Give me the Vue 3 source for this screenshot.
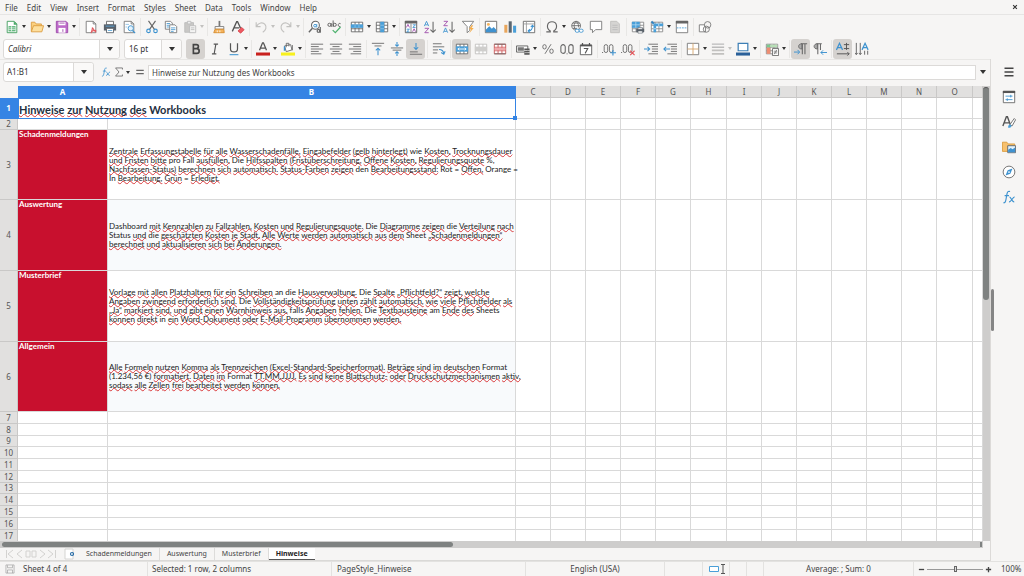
<script setup>
import { ref } from 'vue'

const menus = ['File', 'Edit', 'View', 'Insert', 'Format', 'Styles', 'Sheet', 'Data', 'Tools', 'Window', 'Help']

const lines = (w, c = '#666') =>
  `<g stroke="${c}">` + w.map(([x1, x2], i) => `<path d="M${x1} ${2.5 + i * 2.75}H${x2}"/>`).join('') + '</g>'
const page = '<path d="M2.5 1.5h8l3 3v10h-11z" fill="#fff" stroke="#777"/><path d="M10.5 1.5v3h3" stroke="#777"/>'
const tableGrid = (c = '#666') => `<path d="M1.5 2.5h13v11h-13zM1.5 6h13M1.5 10h13M5.8 2.5v11M10.2 2.5v11" fill="#fff" stroke="${c}"/>`

const icons = {
  new: '<path d="M2.5 1.5h8l3 3v10h-11z" fill="#fff" stroke="#3a9a58"/><path d="M10 1.5v4h4z" fill="#47a766"/><path d="M4 7h8v6H4z" fill="#58b276"/><path d="M4 9h8M4 11h8M7.500 7v6" stroke="#fff" stroke-width=".8"/>',
  open: '<path d="M1.500 13V2.500h4l1.500 2h6v3" fill="#fbd07f" stroke="#dc9a3d"/><path d="M1.500 13.500L4 6.500h11.500l-2 7z" fill="#fddf9e" stroke="#dc9a3d"/>',
  save: '<path d="M1.500 1.500h11l2 2v11h-13z" fill="#bd6ac9" stroke="#9c48a9"/><path d="M4 2h8v4H4z" fill="#fff"/><path d="M4 9h8v5.500H4z" fill="#fff"/><path d="M9 10.500v3M5 3.500h6" stroke="#9c48a9"/>',
  pdf: page + '<path d="M8 15c1-3 2-5 1.500-6.500M8 14c2-2 4-2.500 6-2M10 9c1 3 2 4 4 5" stroke="#e2575c" stroke-width="1.200"/>',
  print: '<path d="M4 1.500h8v4H4z" fill="#fff" stroke="#666"/><path d="M1 5h14v7H1z" fill="#59616a"/><path d="M3 7h10" stroke="#5ea9dd"/><path d="M4 9.500h8v5H4z" fill="#fff" stroke="#59616a"/><path d="M5.500 12h5" stroke="#5ea9dd"/>',
  preview: page + '<circle cx="10" cy="9.500" r="3" fill="#e3f2fc" stroke="#3d92cf"/><path d="M12 12l3 3" stroke="#3d92cf" stroke-width="1.400"/><path d="M4 5h4M4 8h2" stroke="#8dbfe2"/>',
  cut: '<path d="M4 1l7 10M12 1L5 11" stroke="#666" stroke-width="1.300"/><circle cx="4" cy="12.500" r="2" stroke="#3d92cf" stroke-width="1.300"/><circle cx="12" cy="12.500" r="2" stroke="#3d92cf" stroke-width="1.300"/>',
  copy: '<path d="M1.500 1.500h6l2 2v7h-8z" fill="#fff" stroke="#777"/><path d="M6.500 5.500h6l2 2v7h-8z" fill="#fff" stroke="#777"/><path d="M8 9h5M8 11h5M8 13h3M3 4h4M3 6h3M3 8h3" stroke="#4a9ad1"/>',
  paste: '<path d="M2 3h10v11H2z" fill="#c9c8c6" stroke="#bbb"/><path d="M5 1.500h4v3H5z" fill="#eee" stroke="#bbb"/><path d="M7.500 6.500h7v8h-7z" fill="#f4f4f3" stroke="#bbb"/><path d="M9 9h4M9 11h4" stroke="#bbb"/>',
  clone: '<path d="M7.500 1h2v6h-2z" fill="#777"/><path d="M3.500 7.500h10v3h-10z" fill="#fff" stroke="#777"/><path d="M3.500 10.500h10l.5 4h-12z" fill="#f5b35c" stroke="#d58a2b"/><path d="M6 12v2M9 12v2" stroke="#fff"/>',
  clear: '<path d="M1.500 13L6.500 2h1L11 9.500M3.500 9h6" stroke="#555" stroke-width="1.500"/><path d="M8 12.500l4-4 3 2.500-4 4z" fill="#ee5a62" stroke="#d8454d"/>',
  undo: '<path d="M2.500 2.500v5h5M3 7c2-4 7-5 9.500-2s1 7-2.500 9" stroke="#c2c1bf" stroke-width="1.300"/>',
  redo: '<path d="M13.500 2.500v5h-5M13 7c-2-4-7-5-9.500-2s-1 7 2.500 9" stroke="#c2c1bf" stroke-width="1.300"/>',
  find: '<circle cx="8.500" cy="6" r="4.500" fill="#fff" stroke="#666" stroke-width="1.200"/><path d="M5 9.500L1 14" stroke="#666" stroke-width="1.600"/><circle cx="8" cy="6.500" r="1.500" stroke="#3d92cf"/><path d="M10 4.500V8.500" stroke="#3d92cf"/><circle cx="12" cy="12.500" r="1.600" stroke="#555" stroke-width="1.200"/><path d="M14 8v6.500" stroke="#555" stroke-width="1.200"/>',
  spell: '<circle cx="2.800" cy="5.500" r="1.800" stroke="#555"/><path d="M4.800 3.500v4.500M7 .5V8" stroke="#555"/><circle cx="8.800" cy="5.500" r="1.800" stroke="#555"/><path d="M15.500 4.200c-3-1.700-4 4-.3 3.200" stroke="#555"/><path d="M6.500 11.500l3 3 6-6.500" stroke="#4db16d" stroke-width="1.400"/>',
  row: tableGrid() + '<path d="M1 5h14v4H1z" fill="#4a9fd8"/><path d="M5.800 5v4M10.200 5v4" stroke="#a8d4f2" stroke-width=".7"/>',
  col: tableGrid() + '<path d="M6 2h4.500v12H6z" fill="#4a9fd8"/><path d="M6 6h4.500M6 10h4.500" stroke="#a8d4f2" stroke-width=".7"/>',
  autofilter: '<path d="M1.500 1.500h13v13h-13z" fill="#fff" stroke="#555"/><path d="M1 1h14v3H1z" fill="#666"/><path d="M8 4v11" stroke="#777"/><path d="M2.800 8.500l1.700-3.500 1.700 3.500M9.800 13.500l1.700-3.500 1.700 3.500" stroke="#9c48a9"/><path d="M3 10.500h3.200l-3.200 3h3.200M10 5.500h3.200l-3.200 3h3.200" stroke="#3d92cf"/>',
  sortasc: '<path d="M1.500 7L4 1.500 6.500 7M2.500 5.500h3" stroke="#3d92cf"/><path d="M2 9.500h4.500L2 14.500h4.500" stroke="#9c48a9"/><path d="M11.500 2v12M8.500 11l3 3 3-3" stroke="#666" stroke-width="1.200"/>',
  sortdesc: '<path d="M1.500 14.500L4 9l2.500 5.500M2.500 13h3" stroke="#3d92cf"/><path d="M2 1.500h4.500L2 6.500h4.500" stroke="#9c48a9"/><path d="M11.500 2v12M8.500 11l3 3 3-3" stroke="#666" stroke-width="1.200"/>',
  filter: '<path d="M1.500 1.500h13L10 7.500V12l-3 2.500v-7z" fill="#fff" stroke="#777"/><path d="M12 6l-3 4.500h2.500L9.500 15l5-6h-2.500l2-3z" fill="#f5ae4d"/>',
  image: '<path d="M1.500 1.500h13v13h-13z" fill="#fff" stroke="#666"/><path d="M2 14V11l4-4 3 3 2-2 3 3v3z" fill="#3f92d0"/><circle cx="5" cy="5" r="1.700" fill="#f5b35c"/>',
  chart: '<path d="M1.500 5.500h3.500v9H1.500z" fill="#e9a65c"/><path d="M6.500 1.500H10v13H6.500z" fill="#5b656e"/><path d="M11.500 6.500H15v8h-3.500z" fill="#4a9fd8"/>',
  pivot: '<path d="M1.500 1.500h13v13h-13z" fill="#fff" stroke="#666"/><path d="M2 4.500h12M5 2v12" stroke="#999"/><path d="M7 12.500c3 0 5-2 5-6M10 8l2-2 2 2M9 10.500l-2 2 2 2" stroke="#3d92cf" stroke-width="1.200"/>',
  omega: '<path d="M1.500 13.500H6v-1C1 9.500 2 2 8 2s7 7.500 2 10.500v1h4.500" stroke="#666" stroke-width="1.300"/>',
  link: '<circle cx="7" cy="6.500" r="5" fill="#fff" stroke="#666"/><path d="M2 6.500h10M3 3.500h8M3 9.500h5M7 1.500c-3 3-3 7 0 10M7 1.500c3 3 3 5 2.500 7" stroke="#666"/><rect x="6" y="10.500" width="4.500" height="3.500" rx="1.700" fill="#fff" stroke="#3d92cf"/><rect x="10.500" y="10.500" width="4.500" height="3.500" rx="1.700" fill="#fff" stroke="#3d92cf"/>',
  comment: '<path d="M1.500 1.500h13v9.500H7.500L4 14.500V11H1.500z" fill="#fff" stroke="#777"/>',
  doc: '<path d="M3 1.500h7l3 3v10H3z" fill="#d5d4d2" stroke="#c0bfbd"/><path d="M5 6h6M5 8.500h6M5 11h6" stroke="#bbb"/>',
  printarea: tableGrid('#888') + '<path d="M1 2h9v7H1z" fill="#4a9fd8"/><path d="M1 5.500h9M5.500 2v7" stroke="#bfe0f5" stroke-width=".8"/><path d="M6 10h9v4H6z" fill="#59616a"/><path d="M8 8.500h5v2H8zM8 12.500h5v2.500H8z" fill="#fff" stroke="#59616a" stroke-width=".7"/>',
  freeze: tableGrid('#888') + '<path d="M4 4h11v3H7v7H4z" fill="#4a9fd8"/><path d="M10 4v3M4 10h3" stroke="#fff" stroke-width=".7"/><path d="M1 3h4M3 1v4M1.500 1.500l3 3" stroke="#2d7fbe"/>',
  split: '<path d="M1.500 1.500h13v13h-13z" fill="#fff" stroke="#777"/><path d="M1 1h14v3H1z" fill="#666"/><path d="M2 9h12" stroke="#4a9fd8" stroke-dasharray="2 1"/>',
  shapes: '<path d="M1.500 5.500h7v8h-7z" fill="#fff" stroke="#777"/><circle cx="11" cy="5.500" r="3.700" fill="#f6f5f4" stroke="#777"/><circle cx="9.500" cy="10.500" r="3.500" stroke="#777"/>',
  bold: '<path d="M5 3h3.500c3 0 3 4.500 0 4.500H5zM5 7.500h4c3.500 0 3.500 5.500 0 5.500H5z" stroke="#444" stroke-width="1.900"/>',
  italic: '<path d="M6.500 2.500h5M4.500 13.500h5M9 2.500l-2 11" stroke="#555" stroke-width="1.300"/>',
  underline: '<path d="M4 1.500V8c0 4.500 8 4.500 8 0V1.500" stroke="#555" stroke-width="1.400"/><path d="M3 14.500h10" stroke="#3d92cf" stroke-width="1.200"/>',
  color: '<path d="M4 9.500L7.500 1h1L12 9.500M5.500 7h5" stroke="#555" stroke-width="1.500"/><path d="M0 12h16v3.500H0z" fill="#c9211e"/>',
  highlight: '<path d="M4 4.500l7-1.500 1.500 6-6.500 2z" fill="#fff" stroke="#666"/><path d="M6 6V1.500h3V5M13 3.500v6" stroke="#666"/><path d="M4 5v5" stroke="#3d92cf" stroke-width="1.600"/><path d="M0 12h16v3.500H0z" fill="#f8f01e"/>',
  left: lines([[1, 15], [1, 10], [1, 15], [1, 10], [1, 13]]),
  center: lines([[1, 15], [4, 12], [1, 15], [4, 12], [2, 14]]),
  right: lines([[1, 15], [6, 15], [1, 15], [6, 15], [3, 15]]),
  top: '<path d="M1 1.500h14M4 4.500h8" stroke="#666"/><path d="M8 15V7M5.500 9.500L8 7l2.500 2.500" stroke="#3d92cf" stroke-width="1.200"/>',
  middle: '<path d="M1 6.800h14M3 9.300h10" stroke="#666"/><path d="M8 0v5M6 3l2 2 2-2M8 16v-5M6 13l2-2 2 2" stroke="#3d92cf" stroke-width="1.200"/>',
  bottom: '<path d="M1 14h14M1 11.300h9" stroke="#666"/><path d="M8 1v7.500M5.500 6L8 8.500 10.500 6" stroke="#3d92cf" stroke-width="1.200"/>',
  wrap: '<path d="M1 2h10M1 5.500h13M1 9h6M1 12.500h5" stroke="#666"/><path d="M8 8.500c3 0 5 1.500 5.500 4.500M10.500 12l3 2 1.500-3.500" stroke="#3d92cf" stroke-width="1.200"/>',
  merge: tableGrid() + '<path d="M1 5h14v6H1z" fill="#4a9fd8"/><path d="M3 8h10M5 6.500L3.500 8 5 9.500M11 6.500L12.500 8 11 9.500" stroke="#fff"/>',
  mergecells: tableGrid('#c0bfbd') + '<path d="M1 5.500h14v5H1z" fill="#cfcecc"/>',
  unmerge: tableGrid('#c55') + '<path d="M2 6.500h12v3H2z" fill="#f0a9ab"/><path d="M1.500 2.500h13M1.500 13.500h13" stroke="#666"/>',
  currency: '<path d="M.5 4.500h13v7H.5z" fill="#fff" stroke="#555"/><path d="M2 6h7v4H2z" fill="#777"/><path d="M9.500 7.500h6v2h-6zM9.500 10h6v2h-6zM9.500 12.500h6v2h-6z" fill="#555"/><path d="M10 9.700h5M10 12.200h5" stroke="#ddd" stroke-width=".6"/>',
  percent: '<ellipse cx="4" cy="5.500" rx="2" ry="2.500" stroke="#666"/><ellipse cx="12" cy="10.500" rx="2" ry="2.500" stroke="#666"/><path d="M11.500 2.500l-7 11" stroke="#666"/>',
  number: '<rect x="1" y="3" width="5" height="10" rx="2.500" stroke="#666" stroke-width="1.200"/><rect x="10" y="3" width="5" height="10" rx="2.500" stroke="#666" stroke-width="1.200"/><path d="M7.500 13.500h1.200" stroke="#666"/>',
  date: '<path d="M1.500 3.500h13v11h-13z" fill="#fff" stroke="#555"/><path d="M1.500 4h13" stroke="#555" stroke-width="2"/><path d="M4 1v3M12 1v3" stroke="#555" stroke-width="1.400"/><path d="M5.500 7.500h4.500L7 13" stroke="#555" stroke-width="1.200"/>',
  adddec: '<path d="M0 12h1.300" stroke="#666"/><rect x="2.500" y="3" width="4" height="9" rx="2" stroke="#666"/><rect x="8.500" y="3" width="4" height="9" rx="2" stroke="#666"/><path d="M12.500 9v6.500M9.500 12.300H16" stroke="#3d92cf" stroke-width="1.300"/>',
  deldec: '<path d="M0 12h1.300" stroke="#666"/><rect x="2.500" y="3" width="4" height="9" rx="2" stroke="#666"/><rect x="8.500" y="3" width="4" height="9" rx="2" stroke="#666"/><path d="M10.500 10l5 5M15.500 10l-5 5" stroke="#e2575c" stroke-width="1.300"/>',
  indent: lines([[5, 16], [9, 16], [9, 16], [9, 16], [5, 16]]) + '<path d="M0 8h6M4 5.500L6.500 8 4 10.500" stroke="#3d92cf" stroke-width="1.200"/>',
  outdent: lines([[5, 16], [9, 16], [9, 16], [9, 16], [5, 16]]) + '<path d="M1 8h7M3.500 5.500L1 8l2.500 2.500" stroke="#3d92cf" stroke-width="1.200"/>',
  borders: '<path d="M1.500 1.500h13v13h-13z" fill="#fff" stroke="#777"/><path d="M8 1.500v13M1.500 8h13" stroke="#d6a46a"/>',
  linestyle: '<path d="M1 2.500h14M1 6h14" stroke="#bbb" stroke-width="1.500"/><path d="M1 9.500h14M1 13.500h14" stroke="#c2c1bf" stroke-width="2"/>',
  bordercolor: '<path d="M2.500 1.500h11v8.500h-11z" fill="#fff" stroke="#3d7fb5" stroke-width="1.400"/><path d="M0 12h16v3.500H0z" fill="#2a6099"/>',
  conditional: tableGrid('#888') + '<path d="M2 3h4v3H2z" fill="#7cc98f"/><path d="M6 3h8v3H6z" fill="#b8dfb7"/><path d="M2 6.500h4v7H2z" fill="#ee8d72"/><path d="M8.500 7.500h7v8h-7z" fill="#fff" stroke="#666"/><path d="M10 10.500h4M10 12.500h4M13.500 9l-3 5" stroke="#666" stroke-width=".8"/>',
  ltr: '<path d="M9.500 14V2M12.500 14V2M15 2H8" stroke="#666" stroke-width="1.200"/><path d="M9 2C4 2 4 8 9 8z" fill="#aaa" stroke="#666"/><path d="M0 11.500h6M4 9l2.500 2.500L4 14" stroke="#3d92cf" stroke-width="1.100"/>',
  rtl: '<path d="M5.500 14V2M8.500 9V2M10 2H4" stroke="#666" stroke-width="1.200"/><path d="M5 2C0 2 0 8 5 8z" fill="#aaa" stroke="#666"/><path d="M9 12h7M11.500 9.500L9 12l2.500 2.500" stroke="#3d92cf" stroke-width="1.100"/>',
  horizontal: '<path d="M.5 9L4 1.500 7.500 9M2 6.500h4" stroke="#3d92cf" stroke-width="1.400"/><path d="M9 3h6M9 7.500h6M12 1v8M1 13.500h14M13 11.500l2 2-2 2" stroke="#555" stroke-width="1.100"/>',
  vertical: '<path d="M8 9l3.500-7.500L15 9M9.500 6.500h4" stroke="#3d92cf" stroke-width="1.400"/><path d="M1.500 1v13M6 1v13M0 12.500l1.500 2 1.500-2M4.500 12.500l1.500 2 1.500-2M11 10v4.500M14.500 10v4.500" stroke="#666" stroke-width="1.100"/>',
  fx: '<path d="M1.500 14.500c2 .5 2.500-1 3-3.500l1.200-6.500c.5-2.500 1.500-3.500 3.500-2.700M3 6.500h5M8.500 8c2 0 2.500 6 5.500 5.500M14.500 8c-2-.5-4 6-6.500 5.500" stroke="#3d92cf" stroke-width="1.300"/>',
  sigma: '<path d="M13.500 4V1.500h-11L8 8l-5.500 6.500h11V12" stroke="#666" stroke-width="1.300"/>',
  equals: '<path d="M2 5.500h12M2 10.500h12" stroke="#666" stroke-width="2"/>',
  menu: '<path d="M2 3h12M2 8h12M2 13h12" stroke="#444" stroke-width="1.800"/>',
  properties: '<path d="M1.500 1.500h13v13h-13z" fill="#fff" stroke="#666"/><path d="M1 1h14v2.500H1z" fill="#555"/><path d="M4 7h8M10 5.500v3M4 11h8M6 9.500v3" stroke="#3d92cf"/>',
  stylesicon: '<path d="M1 12.500L5 2h1.200l3.300 9M2.500 9h6" stroke="#555" stroke-width="1.600"/><path d="M9 11l5-7 1.500 1.500-4 7z" fill="#fff" stroke="#666"/><path d="M7 14.500c0-2.500 1-4 3-3.500 2 1.500 0 4-3 3.500z" fill="#4a9fd8"/>',
  gallery: '<path d="M.5 13V2.500h5l1.500 2h7.500V13z" fill="#f7c06d" stroke="#d99a3b"/><path d="M6.500 6.500h9v8h-9z" fill="#e3f2fc" stroke="#59616a"/><path d="M7 14v-3l3-2 2 1.500 3-2V14z" fill="#3f92d0"/>',
  navigator: '<circle cx="8" cy="8" r="6.700" fill="#fff" stroke="#666"/><path d="M12 4l-2.500 6L4 12l2.500-6z" fill="#3d92cf"/><circle cx="8" cy="8" r="1" fill="#fff"/>',
  saved: '<path d="M1.500 1.500h13v13h-13zM4 2v4h8V2M4 14.500V9.500h8v5" stroke="#999"/>',
  close: '<path d="M3 3l10 10M13 3L3 13" stroke="#333" stroke-width="3"/>',
}

// n: icon, d: has drop-down, on: pressed, off: disabled, '|': separator
const standardBar = [
  { n: 'new', d: 1 }, { n: 'open', d: 1 }, { n: 'save', d: 1 }, '|', { n: 'pdf' }, { n: 'print' }, { n: 'preview' }, '|',
  { n: 'cut' }, { n: 'copy' }, { n: 'paste', d: 1, off: 1 }, '|', { n: 'clone' }, { n: 'clear' }, '|',
  { n: 'undo', d: 1, off: 1 }, { n: 'redo', d: 1, off: 1 }, '|', { n: 'find' }, { n: 'spell' }, '|',
  { n: 'row', d: 1 }, { n: 'col', d: 1 }, '|', { n: 'autofilter' }, { n: 'sortasc' }, { n: 'sortdesc' }, { n: 'filter' }, '|',
  { n: 'image' }, { n: 'chart' }, { n: 'pivot' }, '|', { n: 'omega', d: 1 }, { n: 'link' }, { n: 'comment' }, { n: 'doc', off: 1 }, '|',
  { n: 'printarea' }, { n: 'freeze', d: 1 }, { n: 'split' }, '|', { n: 'shapes' },
]
const formatBar = [
  { n: 'bold', on: 1 }, { n: 'italic' }, { n: 'underline', d: 1 }, '|', { n: 'color', d: 1 }, { n: 'highlight', d: 1 }, '|',
  { n: 'left' }, { n: 'center' }, { n: 'right' }, '|', { n: 'top' }, { n: 'middle' }, { n: 'bottom', on: 1 }, '|',
  { n: 'wrap' }, '|', { n: 'merge', on: 1 }, { n: 'mergecells', off: 1 }, { n: 'unmerge' }, '|',
  { n: 'currency', d: 1 }, { n: 'percent' }, { n: 'number' }, { n: 'date' }, '|', { n: 'adddec' }, { n: 'deldec' }, '|',
  { n: 'indent' }, { n: 'outdent' }, '|', { n: 'borders', d: 1 }, { n: 'linestyle', d: 1, off: 1 }, { n: 'bordercolor', d: 1 }, '|',
  { n: 'conditional', d: 1 }, '|', { n: 'ltr', on: 1 }, { n: 'rtl' }, '|', { n: 'horizontal', on: 1 }, { n: 'vertical' },
]
const sideIcons = ['menu', 'properties', 'stylesicon', 'gallery', 'navigator', 'fx']

const columns = [
  ['A', 90], ['B', 408], ['C', 35], ['D', 35], ['E', 35], ['F', 35], ['G', 35], ['H', 36], ['I', 35],
  ['J', 35], ['K', 35], ['L', 35], ['M', 35], ['N', 35], ['O', 36],
]
const extra = columns.length - 2 + 1

// Words outside square brackets are flagged by the spell checker.
const notes = [
  { row: 3, h: 70, title: 'Schadenmeldungen', text: [
    'Zentrale Erfassungstabelle für alle Wasserschadenfälle, Eingabefelder (gelb hinterlegt) [wie] Kosten, Trocknungsdauer',
    'und Fristen bitte [pro Fall] ausfüllen. [Die] Hilfsspalten (Fristüberschreitung, Offene Kosten, Regulierungsquote [%,]',
    'Nachfassen-Status) berechnen sich automatisch. Status-Farben zeigen [den] Bearbeitungsstand: [Rot =] Offen, [Orange =]',
    '[In] Bearbeitung, Grün [=] Erledigt.',
  ] },
  { row: 4, h: 71, title: 'Auswertung', text: [
    '[Dashboard] mit Kennzahlen zu Fallzahlen, Kosten und Regulierungsquote. [Die] Diagramme zeigen [die] Verteilung nach',
    '[Status] und [die] geschätzten Kosten je Stadt. Alle Werte werden automatisch aus dem [Sheet] „Schadenmeldungen“',
    'berechnet und aktualisieren sich bei Änderungen.',
  ] },
  { row: 5, h: 71, title: 'Musterbrief', text: [
    'Vorlage mit allen Platzhaltern für ein Schreiben [an die] Hausverwaltung. [Die] Spalte „Pflichtfeld?“ zeigt, welche',
    'Angaben zwingend erforderlich sind. [Die] Vollständigkeitsprüfung unten zählt automatisch, wie viele Pflichtfelder als',
    '„Ja“ markiert sind, und gibt einen Warnhinweis aus, [falls] Angaben fehlen. [Die] Textbausteine [am] Ende des [Sheets]',
    'können direkt [in] ein Word-Dokument oder E-Mail-Programm übernommen werden.',
  ] },
  { row: 6, h: 70, title: 'Allgemein', text: [
    'Alle Formeln nutzen Komma als Trennzeichen (Excel-Standard-Speicherformat). Beträge sind im deutschen [Format]',
    '[(1.234,56 €)] formatiert. Daten im [Format] TT.MM.JJJJ. Es sind keine Blattschutz- oder Druckschutzmechanismen aktiv,',
    'sodass alle Zellen frei bearbeitet werden können.',
  ] },
]
const words = (line) =>
  line.split(/(\[[^\]]*\])/).flatMap((p) =>
    p.startsWith('[')
      ? [{ t: p.slice(1, -1), bad: false }]
      : p.split(/(\s+)/).filter(Boolean).map((t) => ({ t, bad: t.trim() !== '' })))

const emptyRows = [[7, 12], [8, 12], [9, 11], [10, 12], [11, 12], [12, 12], [13, 11], [14, 12], [15, 12], [16, 12], [17, 12]]
const tabs = ['Schadenmeldungen', 'Auswertung', 'Musterbrief', 'Hinweise']
const active = ref('Hinweise')
const formula = ref('Hinweise zur Nutzung des Workbooks')
const cellRef = ref('A1:B1')
const zoom = ref(50)
</script>

<template>
  <div class="app">
    <nav class="menubar">
      <button v-for="m in menus" :key="m" class="menu">{{ m }}</button>
      <button class="close" aria-label="Close"><svg class="x" viewBox="0 0 16 16" fill="none" v-html="icons.close" /></button>
    </nav>

    <div class="toolbar">
      <template v-for="(b, i) in standardBar" :key="i">
        <span v-if="b === '|'" class="sep" />
        <template v-else>
          <button class="tool" :aria-label="b.n"><svg class="icon" viewBox="0 0 16 16" fill="none" v-html="icons[b.n]" /></button>
          <button v-if="b.d" class="drop" :class="{ off: b.off }" :aria-label="b.n + ' options'" />
        </template>
      </template>
    </div>

    <div class="toolbar format">
      <div class="combo name"><select class="italic" aria-label="Font name"><option>Calibri</option></select><span class="arrow" /></div>
      <div class="combo size"><select aria-label="Font size"><option>16 pt</option></select><span class="arrow" /></div>
      <template v-for="(b, i) in formatBar" :key="i">
        <span v-if="b === '|'" class="sep" />
        <template v-else>
          <button class="tool" :class="{ on: b.on }" :aria-label="b.n"><svg class="icon" viewBox="0 0 16 16" fill="none" v-html="icons[b.n]" /></button>
          <button v-if="b.d" class="drop" :class="{ off: b.off }" :aria-label="b.n + ' options'" />
        </template>
      </template>
    </div>

    <div class="body">
      <main class="work">
        <div class="formulabar">
          <div class="combo ref"><input v-model="cellRef" aria-label="Name box"><button class="arrow" aria-label="Names" /></div>
          <div class="fxtools">
            <button class="mini" aria-label="Function wizard"><svg class="small" viewBox="0 0 16 16" fill="none" v-html="icons.fx" /></button>
            <button class="mini" aria-label="Sum"><svg class="small" viewBox="0 0 16 16" fill="none" v-html="icons.sigma" /></button>
            <button class="drop" aria-label="Sum options" />
            <button class="mini eq" aria-label="Formula"><svg class="small" viewBox="0 0 16 16" fill="none" v-html="icons.equals" /></button>
          </div>
          <input v-model="formula" class="formula" aria-label="Formula">
          <button class="expand" aria-label="Expand formula bar" />
        </div>

        <div class="sheetarea">
          <div class="sheet">
            <table>
              <colgroup>
                <col class="rowcol">
                <col v-for="[n, w] in columns" :key="n" :style="{ width: w + 'px' }">
                <col>
              </colgroup>
              <thead>
                <tr>
                  <th class="corner" />
                  <th v-for="([n], i) in columns" :key="n" :class="{ sel: i < 2 }">{{ n }}</th>
                  <th />
                </tr>
              </thead>
              <tbody>
                <tr class="r1">
                  <th class="sel">1</th>
                  <td colspan="2" class="title">
                    <span class="bad">Hinweise</span> <span class="bad">zur</span> <span class="bad">Nutzung</span> <span class="bad">des</span> Workbooks
                    <i class="handle" />
                  </td>
                  <td v-for="c in extra" :key="c" />
                </tr>
                <tr class="r2"><th>2</th><td v-for="c in extra + 2" :key="c" /></tr>
                <tr v-for="n in notes" :key="n.row" :style="{ height: n.h + 'px' }">
                  <th>{{ n.row }}</th>
                  <td class="label">{{ n.title }}</td>
                  <td class="text" :class="{ tint: n.row % 2 === 0 }">
                    <div v-for="(l, i) in n.text" :key="i" class="line"><span v-for="(w, j) in words(l)" :key="j" :class="{ bad: w.bad }">{{ w.t }}</span></div>
                  </td>
                  <td v-for="c in extra" :key="c" />
                </tr>
                <tr v-for="[n, h] in emptyRows" :key="n" :style="{ height: h + 'px' }">
                  <th>{{ n }}</th><td v-for="c in extra + 2" :key="c" />
                </tr>
              </tbody>
            </table>
          </div>
          <div class="vscroll"><div class="vthumb" /></div>
        </div>
        <div class="hscroll"><div class="hthumb" /><div class="hend" /></div>

        <div class="tabs">
          <div class="tabnav">
            <svg class="navicons" viewBox="0 0 52 10" fill="none" stroke="#d3d2d0"><path d="M1.500 1v8M8 1L3 5l5 4M17 1l-5 4 5 4M21 2h4v6h-4zM27 2h4v6h-4zM35 1l5 4-5 4M43 1l5 4-5 4M50.500 1v8" /></svg>
            <button class="addsheet" aria-label="Add sheet"><svg class="add" viewBox="0 0 10 12" fill="none"><path d="M1 1h8v10H1z" fill="#fff" stroke="#d5d4d2" /><circle cx="8" cy="6" r="1.500" stroke="#2a6ea8" stroke-width="1.200" /></svg></button>
          </div>
          <button v-for="t in tabs" :key="t" class="tab" :class="{ active: t === active }" @click="active = t">{{ t }}</button>
        </div>
      </main>

      <div class="splitter"><div class="grip" /></div>
      <aside class="sidebar">
        <button v-for="s in sideIcons" :key="s" class="side" :class="s" :aria-label="s"><svg class="icon" viewBox="0 0 16 16" fill="none" v-html="icons[s]" /></button>
      </aside>
    </div>

    <footer class="status">
      <span class="s-save"><svg class="small" viewBox="0 0 16 16" fill="none" v-html="icons.saved" /></span>
      <span class="s-sheet">Sheet 4 of 4</span>
      <span class="s-sel">Selected: 1 row, 2 columns</span>
      <span class="s-page">PageStyle_Hinweise</span>
      <span class="s-lang">English (USA)</span>
      <span class="s-gap" />
      <span class="s-mode"><svg class="mode" viewBox="0 0 18 10" fill="none"><path d="M.5 2.500h9v5h-9z" fill="#fff" stroke="#4a9fd8" /><path d="M14 1v8M12 .5h4M12 9.500h4" stroke="#555" /></svg></span>
      <span class="s-cell" /><span class="s-cell" />
      <span class="s-avg">Average: ; Sum: 0</span>
      <span class="s-zoom">
        <button class="z" aria-label="Zoom out"><svg class="zi" viewBox="0 0 8 8" fill="none"><path d="M1 4h6" stroke="#444" stroke-width="1.500" /></svg></button>
        <input v-model="zoom" type="range" aria-label="Zoom">
        <button class="z" aria-label="Zoom in"><svg class="zi" viewBox="0 0 8 8" fill="none"><path d="M1 4h6M4 1v6" stroke="#444" stroke-width="1.500" /></svg></button>
      </span>
      <span class="s-pct">100%</span>
    </footer>
  </div>
</template>

<style>
body { background: #f6f5f4; overflow: hidden; }
</style>

<style scoped>
.app {
  display: flex; flex-direction: column; height: 100vh; overflow: hidden;
  background: #f6f5f4; color: #444; font: 8px/12px "Noto Sans", sans-serif;
}
.app * { box-sizing: border-box; }
button { border: 0; padding: 0; margin: 0; background: none; color: inherit; font: inherit; }
svg { display: block; flex: none; }
.icon { width: 14px; height: 14px; }
.small { width: 10px; height: 10px; }

.menubar { display: flex; height: 14px; flex: none; padding-left: 1px; }
.menu { padding: 1px 4px 0 4px; margin-right: 1px; }
.close { margin-left: auto; width: 19px; display: flex; align-items: center; justify-content: center; }
.x { width: 6px; height: 6px; }

.toolbar { display: flex; align-items: center; flex: none; height: 24px; padding-left: 2px; border-top: 1px solid #e6e5e4; }
.format { height: 21px; border-top: 0; padding-left: 3px; }
.tool { width: 19px; height: 20px; flex: none; display: flex; align-items: center; justify-content: center; border-radius: 3px; }
.tool.on { background: #d5d2cf; }
.drop { width: 6px; height: 16px; flex: none; display: flex; align-items: center; justify-content: center; }
.drop::before { content: ""; border: 2px solid transparent; border-top: 3px solid #333; border-bottom: 0; }
.drop.off::before { border-top-color: #c2c1bf; }
.sep { width: 4px; height: 18px; flex: none; display: flex; justify-content: center; }
.sep::before { content: ""; width: 1px; background: #e8e7e5; }

.combo { display: flex; position: relative; height: 20px; flex: none; background: #fff; border: 1px solid #dcdad8; border-radius: 3px; }
.combo select, .combo input {
  appearance: none; width: 100%; min-width: 0; border: 0; background: none; outline: 0; padding: 0 4px;
  font: inherit; color: #333;
}
.combo input { padding: 0 3px; }
.combo select.italic { font-style: italic; }
.combo .arrow {
  width: 20px; flex: none; display: flex; align-items: center; justify-content: center;
  border-left: 1px solid #dcdad8; background: #faf9f8; pointer-events: none; border-radius: 0 3px 3px 0;
}
.arrow::before, .expand::before { content: ""; border: 3px solid transparent; border-top: 4px solid #333; border-bottom: 0; }
.name { width: 117px; margin-right: 4px; }
.size { width: 58px; margin-right: 4px; }
.ref { width: 91px; }

.body { flex: 1; min-height: 0; display: flex; }
.work { flex: 1; min-width: 0; display: flex; flex-direction: column; }
.formulabar { display: flex; align-items: center; flex: none; height: 27px; padding: 0 0 2px 3px; border-top: 1px solid #e8e7e5; }
.fxtools { display: flex; align-items: center; padding-left: 5px; width: 54px; flex: none; }
.mini { width: 13px; height: 16px; display: flex; align-items: center; justify-content: center; }
.eq { width: 17px; }
.formula {
  flex: 1; min-width: 0; height: 15px; border: 1px solid #dcdad8; background: #fff; padding: 0 3px;
  font: inherit; color: #444; outline: 0;
}
.expand { width: 14px; height: 16px; display: flex; align-items: center; justify-content: center; }

.sheetarea { flex: 1; min-height: 0; display: flex; }
.sheet { flex: 1; min-width: 0; overflow: hidden; background: #fff; }
table { border-collapse: separate; border-spacing: 0; table-layout: fixed; width: 100%; }
.rowcol { width: 18px; }
th, td { padding: 0; border-right: 1px solid #d9d9d9; border-bottom: 1px solid #d9d9d9; }
th { background: #e1e0df; border-color: #c9c8c7; color: #555; font-weight: 400; font-size: 8px; line-height: 10px; }
thead tr { height: 12px; }
th.sel { background: #3584e4; border-color: #3584e4; color: #fff; font-weight: 700; }
th.corner { background: #f6f5f4; border-color: #f6f5f4; }
.r1 { height: 21px; }
.r2 { height: 11px; }
.title {
  position: relative; border: 1px solid #3584e4; color: #24303f; padding-top: 1px;
  font: 700 11px/15px Lato, sans-serif; white-space: nowrap;
}
.handle { position: absolute; right: -2px; bottom: -2px; width: 4px; height: 4px; background: #3584e4; }
.label {
  background: #c8102e; border-color: #d9d9d9; color: #fff; padding-left: 1px; vertical-align: top;
  font: 700 8px/9px Lato, sans-serif;
}
.text { padding-left: 1px; vertical-align: middle; color: #222; font: 8px/9px Lato, sans-serif; }
.tint { background: #f8fafc; }
.line { white-space: pre; }
.bad { text-decoration: underline wavy #d9383a 1px; text-underline-offset: -1px; text-decoration-skip-ink: none; }

.vscroll { width: 7px; flex: none; background: #cecdcc; padding: 1px 1px 0 0; }
.vthumb { height: 47%; background: #7f8281; border-radius: 3px; border-top: 1px solid #555; }
.hscroll { display: flex; justify-content: space-between; height: 7px; flex: none; background: #cecdcc; padding: 1px 1px 1px 2px; margin-right: 7px; }
.hthumb { width: 465px; max-width: 46%; background: #7f8281; border-radius: 3px; }
.hend { width: 2px; background: #7f8281; }

.tabs { display: flex; height: 13px; flex: none; border-bottom: 1px solid #dad9d7; font-size: 7px; }
.tabnav { display: flex; align-items: center; width: 79px; flex: none; padding-left: 5px; gap: 7px; }
.navicons { width: 52px; height: 10px; }
.add { width: 10px; height: 12px; }
.tab { padding: 0 7px; line-height: 12px; border-right: 1px solid #dddcda; }
.tab.active { background: #fff; font-weight: 700; color: #222; border-right: 0; border-bottom: 1px solid #555; padding: 0 7px; }

.splitter { width: 5px; flex: none; display: flex; align-items: center; border-left: 1px solid #dcdad8; }
.grip { width: 3px; height: 42px; background: #858585; border-radius: 2px; }
.sidebar { width: 29px; flex: none; display: flex; flex-direction: column; align-items: center; padding-right: 2px; }
.side { height: 25px; display: flex; align-items: center; justify-content: center; }
.side.menu { padding: 0; margin: 0; }
.side.menu .icon { width: 12px; height: 12px; }

.status { display: flex; height: 15px; flex: none; align-items: center; border-top: 1px solid #e3e2e0; white-space: nowrap; line-height: 14px; }
.status span { height: 14px; }
.s-save { width: 20px; display: flex; align-items: center; padding-left: 5px; }
.s-sheet { width: 128px; padding-left: 3px; border-right: 1px solid #e3e2e0; }
.s-sel { width: 184px; padding-left: 4px; border-right: 1px solid #e3e2e0; }
.s-page { width: 194px; padding-left: 5px; border-right: 1px solid #e3e2e0; }
.s-lang { width: 139px; text-align: center; border-right: 1px solid #e3e2e0; }
.s-gap { width: 38px; border-right: 1px solid #e3e2e0; }
.s-mode { width: 27px; display: flex; align-items: center; padding-left: 6px; border-right: 1px solid #e3e2e0; }
.mode { width: 18px; height: 10px; }
.s-cell { width: 17px; border-right: 1px solid #e3e2e0; }
.s-avg { flex: 1; text-align: center; border-right: 1px solid #e3e2e0; }
.s-zoom { display: flex; align-items: center; width: 82px; padding-left: 3px; }
.z { width: 9px; height: 12px; display: flex; align-items: center; justify-content: center; }
.zi { width: 7px; height: 7px; }
.s-zoom input { appearance: none; width: 56px; height: 10px; margin: 0 1px; background: linear-gradient(#999, #999) center / 100% 1px no-repeat; }
.s-zoom input::-webkit-slider-thumb { appearance: none; width: 3px; height: 6px; background: #ddd; border: 1px solid #666; }
.s-pct { width: 28px; padding-left: 5px; }
</style>
